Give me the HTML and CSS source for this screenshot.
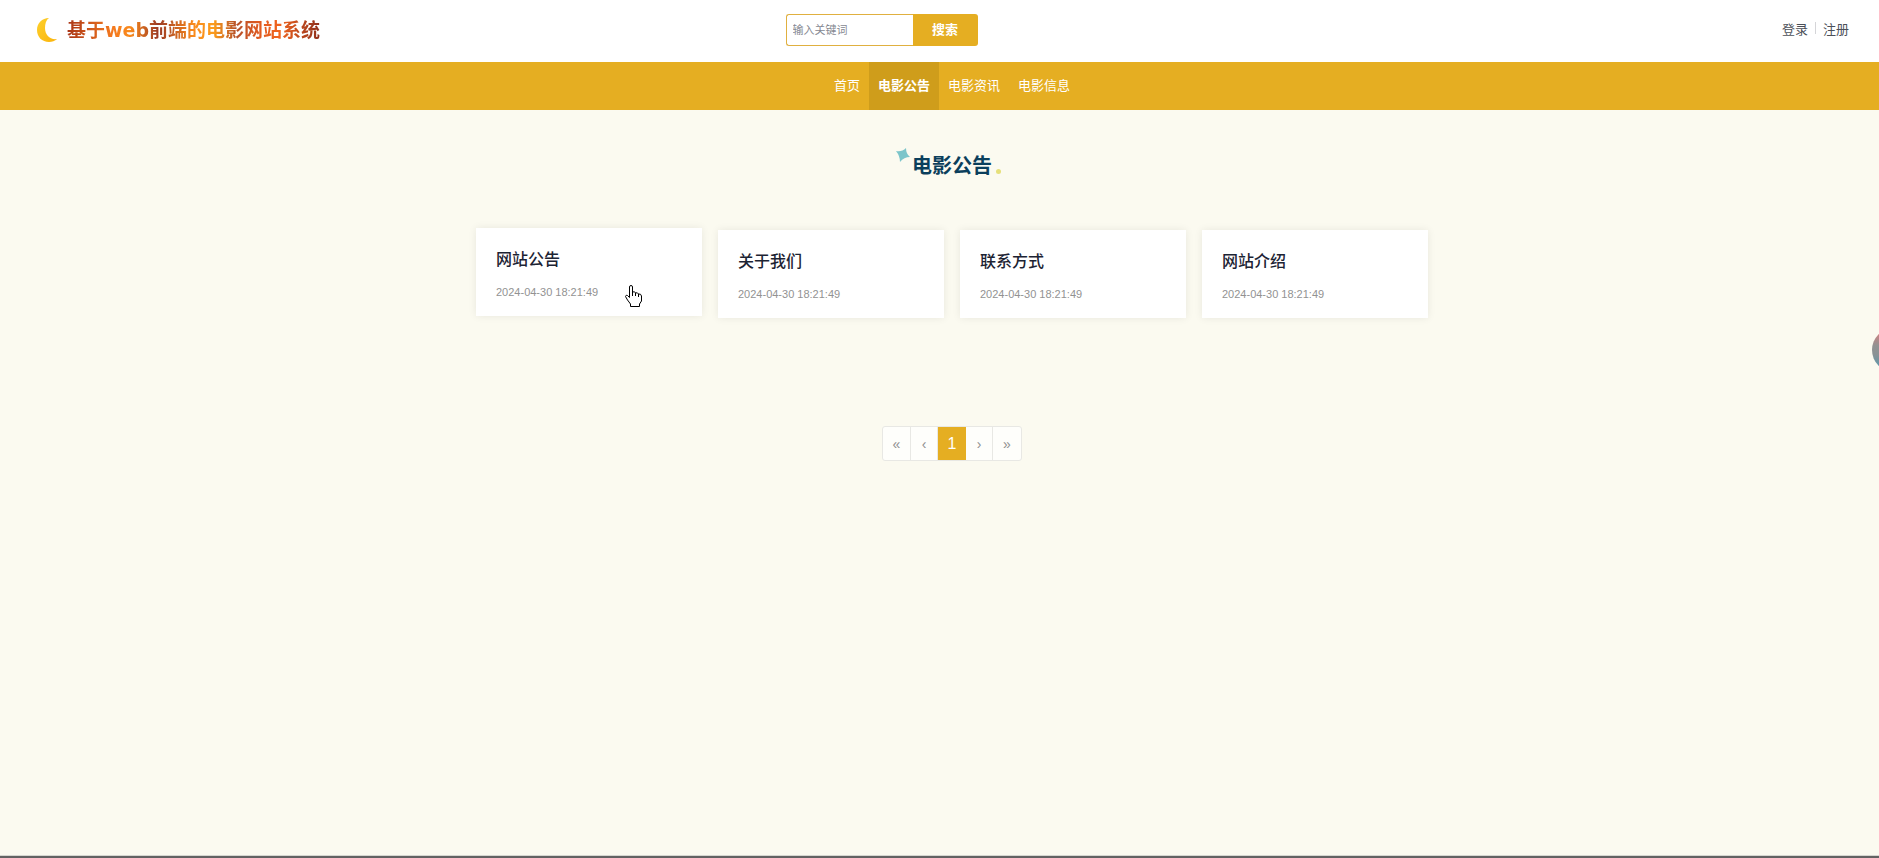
FILE: index.html
```html
<!DOCTYPE html>
<html lang="zh-CN">
<head>
    <meta charset="UTF-8">
    <meta name="viewport" content="width=device-width, initial-scale=1.0">
    <title>电影公告</title>
    <link rel="stylesheet" href="styles.css">
</head>
<body>
    <header class="header">
        <a class="logo" href="#">
            <svg width="20" height="26" viewBox="0 0 20 26" aria-hidden="true">
                <defs>
                    <linearGradient id="moon" x1="0" y1="0" x2="1" y2="1">
                        <stop offset="0" stop-color="#fdd02c"/>
                        <stop offset="1" stop-color="#fbb40c"/>
                    </linearGradient>
                </defs>
                <path fill="url(#moon)" d="M12 1C5 1 0 6 0 13s5 12 12 12c3 0 6-1 8-3C13 23 8 18 8 11c0-4 1-8 4-10z"/>
            </svg>
            <span class="logo-text">基于web前端的电影网站系统</span>
        </a>
        <form class="search">
            <input type="text" placeholder="输入关键词" aria-label="输入关键词">
            <button type="submit">搜索</button>
        </form>
        <div class="user-links">
            <a href="#">登录</a>
            <span class="divider"></span>
            <a href="#">注册</a>
        </div>
    </header>

    <nav class="nav">
        <a href="#">首页</a>
        <a href="#" class="active">电影公告</a>
        <a href="#">电影资讯</a>
        <a href="#">电影信息</a>
    </nav>

    <main class="main">
        <div class="section-title">
            <svg class="star" width="14" height="14" viewBox="0 0 14 14" aria-hidden="true">
                <path fill="#7cc5ca" d="M0 3q6 1 10-3 0 6 4 9-6 0-10 5 0-6-4-11z"/>
            </svg>
            <h1>电影公告</h1>
            <span class="dot"></span>
        </div>

        <div class="cards">
            <a class="card hovered" href="#">
                <h2>网站公告</h2>
                <p>2024-04-30 18:21:49</p>
                <svg class="cursor" width="17" height="22" viewBox="0 0 17 22" aria-hidden="true">
                    <path fill="#fff" stroke="#000" stroke-width="1" stroke-linejoin="round" d="M4.500 12.500V2q0-1.500 1.500-1.500T7.500 2v5q2.500-1 3 1 2-1 3 1 2.500-.5 3 2v5l-2 3v2.500h-9V19l-3-4-2-3.500q.5-2 2-1z"/>
                    <path fill="none" stroke="#000" stroke-width="1" d="M7.500 7v4M10.500 8v3M13.500 9v3"/>
                </svg>
            </a>
            <a class="card" href="#">
                <h2>关于我们</h2>
                <p>2024-04-30 18:21:49</p>
            </a>
            <a class="card" href="#">
                <h2>联系方式</h2>
                <p>2024-04-30 18:21:49</p>
            </a>
            <a class="card" href="#">
                <h2>网站介绍</h2>
                <p>2024-04-30 18:21:49</p>
            </a>
        </div>

        <div class="pagination">
            <button type="button" class="edge">«</button>
            <button type="button">‹</button>
            <button type="button" class="current">1</button>
            <button type="button">›</button>
            <button type="button" class="edge">»</button>
        </div>
    </main>

    <footer class="footer"></footer>
    <button type="button" class="float-btn" aria-label="菜单"></button>
</body>
</html>
```

FILE: styles.css
```css
* {
    box-sizing: border-box;
}

body {
    margin: 0;
    min-height: 100vh;
    display: flex;
    flex-direction: column;
    overflow-x: hidden;
    background-color: #fbfaf0;
    font-family: "Liberation Sans", "Noto Sans CJK SC", sans-serif;
    font-size: 13px;
    color: #4b4f58;
}

a {
    color: inherit;
    text-decoration: none;
}

.header {
    display: grid;
    grid-template-columns: 1fr auto 1fr;
    align-items: center;
    height: 62px;
    padding: 0 30px 2px 37px;
    background: #fff;
}

.logo {
    display: flex;
    align-items: center;
    gap: 10px;
}

.logo-text {
    font-family: "DejaVu Sans", "Noto Sans CJK SC", sans-serif;
    font-size: 19px;
    font-weight: bold;
    line-height: 28px;
    white-space: nowrap;
    color: transparent;
    background: linear-gradient(90deg, #a93416 0%, #f4791f 18%, #f98a1c 25%, #9c3a24 36%, #f98a1c 50%, #fb9c1c 58%, #b5502a 67%, #e05a20 76%, #f0641e 84%, #8f2f1c 100%);
    -webkit-background-clip: text;
    background-clip: text;
}

.search {
    display: flex;
    width: 192px;
    height: 32px;
    margin-right: 123px;
}

.search input {
    flex: 1;
    min-width: 0;
    padding: 0 6px;
    border: 1px solid #e0b040;
    border-right: none;
    border-radius: 3px 0 0 3px;
    font-family: inherit;
    font-size: 11px;
    outline: none;
}

.search input::placeholder {
    color: #858891;
}

.search button {
    width: 65px;
    padding: 0 0 4px;
    border: none;
    border-radius: 0 3px 3px 0;
    background: #e5ae22;
    color: #fff;
    font-family: inherit;
    font-size: 13px;
    font-weight: bold;
}

.user-links {
    display: flex;
    align-items: center;
    justify-content: flex-end;
    gap: 7px;
    padding-bottom: 4px;
}

.divider {
    width: 1px;
    height: 12px;
    background: #d5d5d8;
}

.nav {
    display: flex;
    justify-content: center;
    height: 48px;
    padding-left: 25px;
    background: #e5ae22;
    color: #fff;
    line-height: 48px;
}

.nav a {
    padding: 0 9px;
}

.nav a.active {
    background: #cf9d1b;
    font-weight: bold;
}

.main {
    flex: 1;
    display: flex;
    flex-direction: column;
    align-items: center;
    padding: 40px 0 40px 25px;
}

.section-title {
    position: relative;
}

.section-title h1 {
    margin: 0;
    color: #0b3f5c;
    font-size: 20px;
    line-height: 32px;
}

.star {
    position: absolute;
    top: -2px;
    left: -16px;
}

.dot {
    position: absolute;
    right: -9px;
    bottom: 8px;
    width: 5px;
    height: 5px;
    border-radius: 50%;
    background: #e6e07a;
}

.cards {
    display: grid;
    grid-template-columns: repeat(4, 1fr);
    gap: 16px;
    width: 100%;
    max-width: 952px;
    margin-top: 48px;
}

.card {
    position: relative;
    padding: 20px 20px 16px;
    background: #fff;
    box-shadow: 0 0 8px rgba(0, 0, 0, 0.08);
}

.card.hovered {
    transform: translateY(-2px);
}

.card h2 {
    margin: 0 0 12px;
    color: #1c2333;
    font-size: 16px;
    font-weight: 500;
    line-height: 24px;
}

.card p {
    margin: 0;
    color: #929292;
    font-size: 11px;
    line-height: 16px;
}

.cursor {
    position: absolute;
    top: 57px;
    left: 149px;
}

.pagination {
    display: flex;
    margin-top: 108px;
    border: 1px solid #e8e8e4;
    border-radius: 3px;
    background: #fefefb;
}

.pagination button {
    width: 27px;
    height: 33px;
    padding: 0;
    border: none;
    border-right: 1px solid #e8e8e4;
    background: none;
    color: #8f8f8f;
    font-family: inherit;
    font-size: 14px;
}

.pagination .edge {
    width: 28px;
}

.pagination button:last-child {
    border-right: none;
}

.pagination .current {
    width: 28px;
    border: none;
    background: #e5ae22;
    color: #fff;
    font-size: 16px;
}

.footer {
    height: 3px;
    border-top: 1px solid #d6d6d0;
    background: #626262;
}

.float-btn {
    position: fixed;
    top: 328px;
    right: -37px;
    width: 44px;
    height: 44px;
    border: none;
    border-radius: 50%;
    background: linear-gradient(#d08080 10%, #929292 40%, #8a9295 60%, #5a98ac 90%);
}
```
